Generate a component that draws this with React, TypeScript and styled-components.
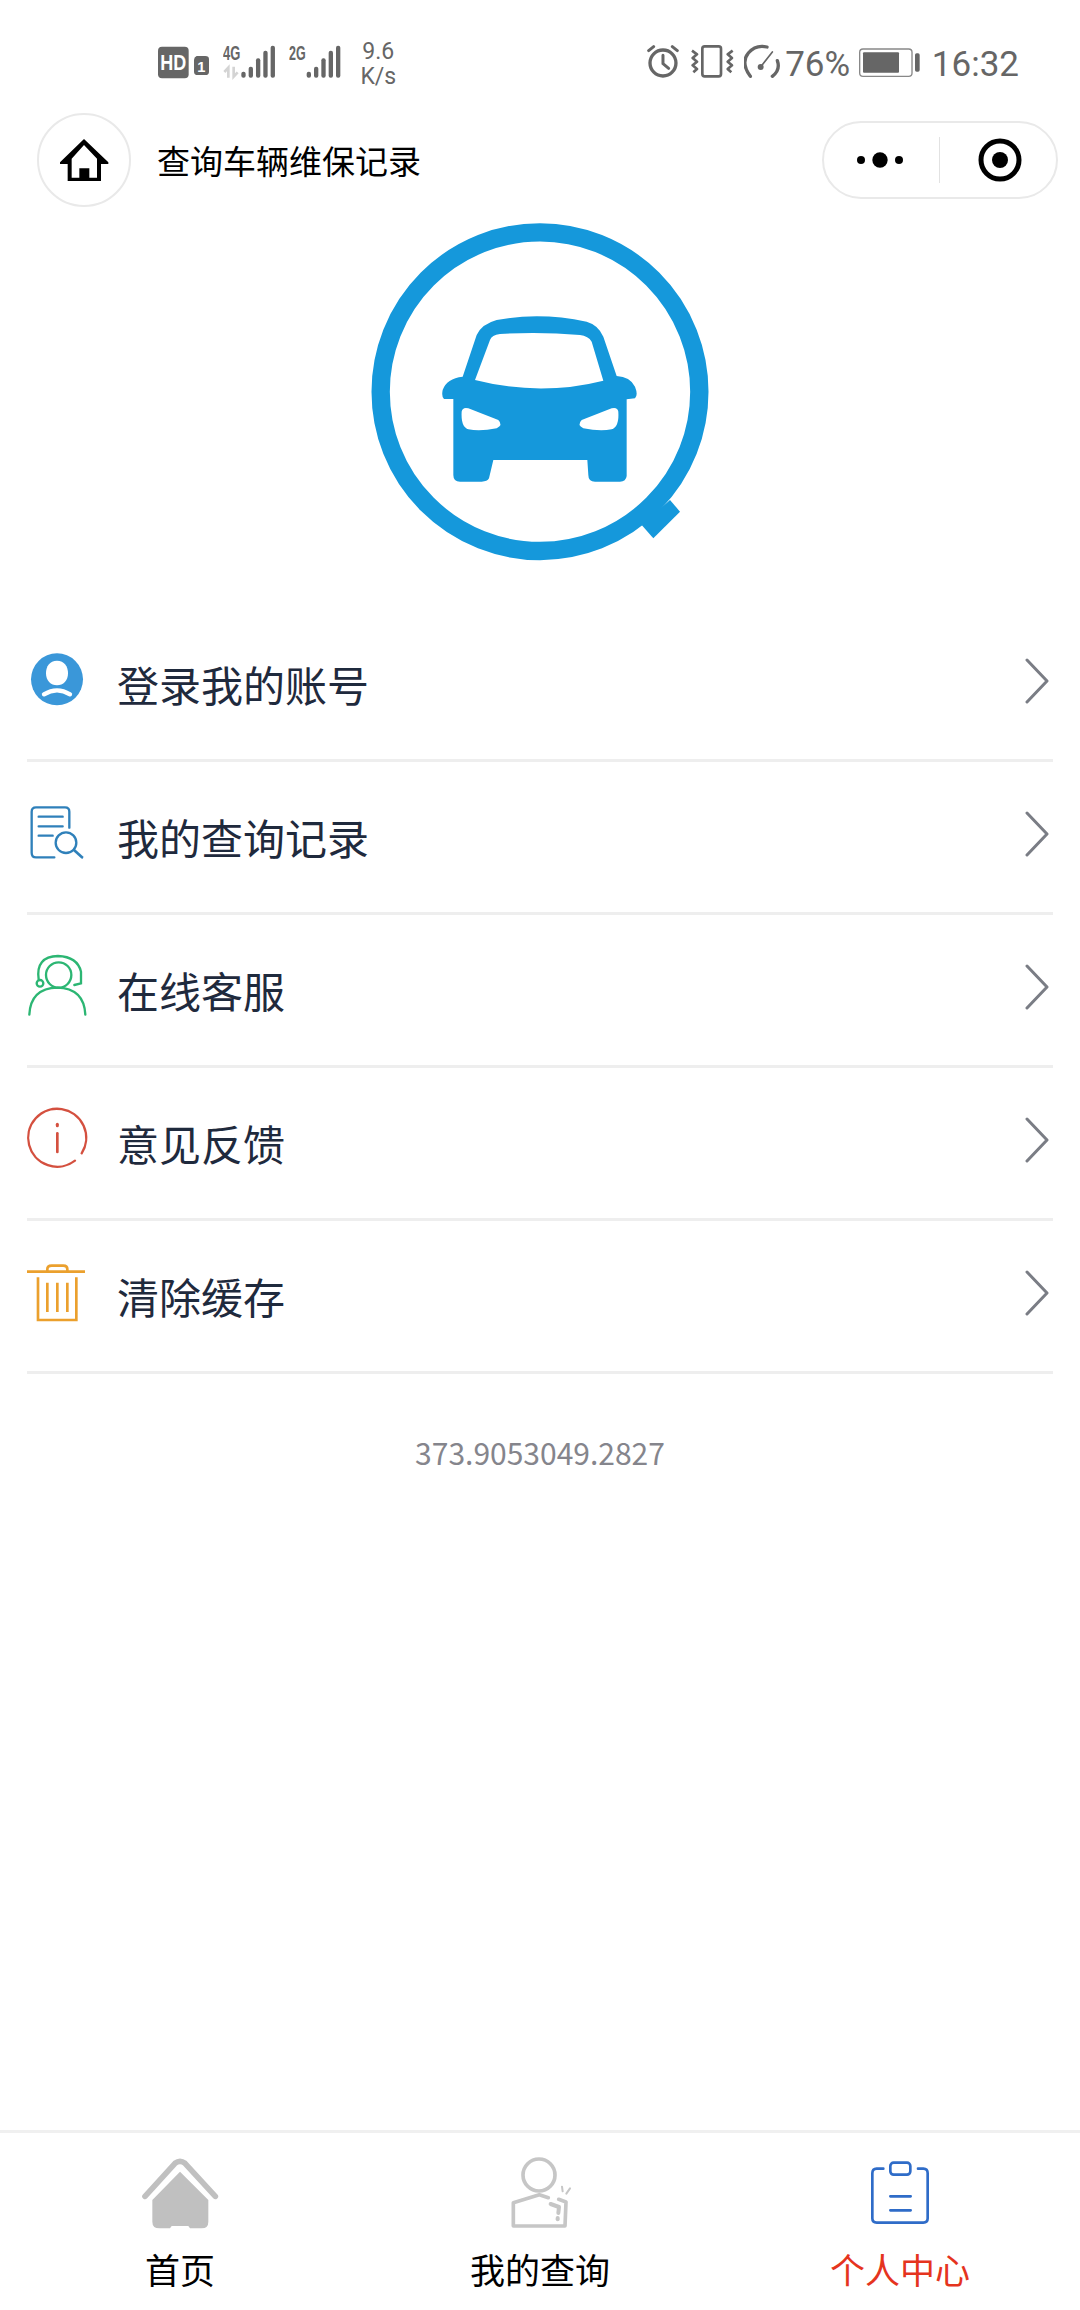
import React from 'react';
import styled, { createGlobalStyle } from 'styled-components';

const CJK = `"Noto Sans CJK SC", "Noto Sans", sans-serif`;

const Global = createGlobalStyle`
  html, body { margin: 0; padding: 0; background: #fff; }
  * { box-sizing: border-box; }
`;

const Page = styled.div`
  width: 1080px;
  height: 2310px;
  display: flex;
  flex-direction: column;
  background: #fff;
  font-family: ${CJK};
  overflow: hidden;
`;

const StatusBar = styled.div`
  height: 40px;
  margin-top: 42px;
  padding: 0 61px 0 158px;
  display: flex;
  align-items: center;
  justify-content: space-between;
  color: #666;
  font-family: Roboto, sans-serif;
`;

const StatusGroup = styled.div`
  display: flex;
  align-items: center;
  height: 40px;
`;

const StatusIcon = styled.svg<{ $left?: number }>`
  display: block;
  height: 40px;
  flex: none;
  margin-left: ${p => p.$left ?? 0}px;
`;

const Speed = styled.div`
  margin: 3px 0 0 17px;
  width: 40px;
  font-size: 23px;
  line-height: 25px;
  text-align: center;
  white-space: nowrap;
`;

const StatusText = styled.span<{ $left?: number }>`
  font-size: 35px;
  line-height: 40px;
  margin-top: 6px;
  margin-left: ${p => p.$left ?? 0}px;
`;

const NavBar = styled.div`
  height: 94px;
  margin-top: 31px;
  padding: 0 22px 0 37px;
  display: flex;
  align-items: center;
`;

const HomeButton = styled.div`
  width: 94px;
  height: 94px;
  flex: none;
  border: 2px solid #e9e9e9;
  border-radius: 50%;
  display: flex;
  align-items: center;
  justify-content: center;
`;

const NavTitle = styled.div`
  margin-left: 26px;
  font-size: 33px;
  line-height: 44px;
  color: #000;
`;

const Capsule = styled.div`
  margin-left: auto;
  width: 236px;
  height: 78px;
  border: 2px solid #e9e9e9;
  border-radius: 39px;
  display: flex;
  align-items: center;
`;

const CapsuleCell = styled.div<{ $nudge: number }>`
  flex: 1;
  height: 100%;
  display: flex;
  align-items: center;
  justify-content: center;
  padding-left: ${p => Math.max(p.$nudge, 0)}px;
  padding-right: ${p => Math.max(-p.$nudge, 0)}px;
`;

const CapsuleDivider = styled.div`
  width: 1px;
  height: 46px;
  background: #e2e2e2;
  flex: none;
`;

const LogoWrap = styled.div`
  margin-top: 3px;
  height: 360px;
  display: flex;
  justify-content: center;
`;

const Menu = styled.div`
  margin: 39px 27px 0;
  display: flex;
  flex-direction: column;
`;

const Row = styled.div`
  height: 153px;
  border-bottom: 3px solid #eeeeee;
  display: flex;
  align-items: flex-start;
`;

const RowIcon = styled.svg`
  display: block;
  flex: none;
  width: 60px;
  height: 60px;
  margin-top: 41px;
  overflow: visible;
`;

const RowLabel = styled.div`
  margin: 45px 0 0 30px;
  font-size: 42px;
  line-height: 60px;
  color: #1f2a3d;
`;

const Chevron = styled.svg`
  display: block;
  flex: none;
  width: 24px;
  height: 46px;
  margin: 49px 4px 0 auto;
`;

const Version = styled.div`
  margin-top: 58px;
  text-align: center;
  font-size: 30px;
  line-height: 40px;
  color: #85858c;
`;

const TabBar = styled.div`
  margin-top: auto;
  height: 180px;
  border-top: 3px solid #f0f0f0;
  display: grid;
  grid-template-columns: repeat(3, 360px);
`;

const Tab = styled.div`
  display: flex;
  flex-direction: column;
  align-items: center;
  padding-top: 20px;
`;

const TabIcon = styled.svg`
  display: block;
  width: 80px;
  height: 80px;
  overflow: visible;
`;

const TabLabel = styled.div<{ $active?: boolean }>`
  margin-top: 11px;
  font-size: 35px;
  line-height: 50px;
  color: ${p => (p.$active ? '#e5341e' : '#000')};
`;

const bars = (x: number) =>
  [125, 110, 85, 62, 47].map((t, i) => (
    <rect key={i} x={x + i * 22} y={t} width={13} height={143 - t} rx={6} fill="#666" />
  ));

const menu = [
  {
    label: '登录我的账号',
    box: '81 60 180 180',
    icon: (
      <>
        <circle cx="171" cy="148" r="78" fill="#3a97d9" />
        <path d="M171 92c-22 0-33 17-33 38 0 22 14 36 33 36s33-14 33-36c0-21-11-38-33-38z" fill="#fff" />
        <path d="M132 193q39-24 78 0" fill="none" stroke="#fff" strokeWidth="13" strokeLinecap="round" />
      </>
    ),
  },
  {
    label: '我的查询记录',
    box: '81 519 180 180',
    icon: (
      <g fill="none" stroke="#2f80ba" strokeWidth="7" strokeLinecap="round">
        <path d="M163 682H108q-13 0-13-14V545q0-13 13-13h87q13 0 13 13v48" />
        <path d="M116 560h72M116 589h72M116 617h42" />
        <circle cx="198" cy="638" r="31" />
        <path d="M222 660l24 22" strokeWidth="8" />
      </g>
    ),
  },
  {
    label: '在线客服',
    box: '81 108 180 180',
    icon: (
      <g fill="none" stroke="#2cb673" strokeWidth="7" strokeLinecap="round">
        <circle cx="176" cy="165" r="38" />
        <path d="M116 178q-10-68 58-70 58 2 69 47v35l-20 5" />
        <circle cx="120" cy="190" r="10" />
        <path d="M88 284q4-79 84-81 80 2 84 81" />
      </g>
    ),
  },
  {
    label: '意见反馈',
    box: '81 567 180 180',
    icon: (
      <g fill="none" stroke="#d4503f" strokeWidth="7" strokeLinecap="round">
        <path d="M245 700A87 87 0 1 0 225 722" />
        <path d="M172 640v56" strokeWidth="8" />
        <path d="M172 613v4" strokeWidth="9" />
      </g>
    ),
  },
  {
    label: '清除缓存',
    box: '81 1026 180 180',
    icon: (
      <g fill="none" stroke="#eba02d" strokeWidth="8">
        <path d="M81 1055H255" />
        <path d="M142 1055v-8q0-10 13-10h35q12 0 12 10v8" />
        <path d="M114 1072v128h115v-128" />
        <path d="M142 1088v88M172 1088v88M202 1088v88" />
      </g>
    ),
  },
];

export default function App() {
  return (
    <Page>
      <Global />
      <StatusBar>
        <StatusGroup>
          <StatusIcon viewBox="55 36 153 120" width="51">
            <rect x="55" y="50" width="92" height="95" rx="12" fill="#666" />
            <text x="101" y="121" textAnchor="middle" fontFamily="Liberation Sans" fontWeight="700" fontSize="68" textLength="78" lengthAdjust="spacingAndGlyphs" fill="#fff">HD</text>
            <path d="M163 90q0-9 8-12h26q11 0 11 10v37q0 10-11 10h-23q-11 0-11-10z" fill="#666" />
            <text x="185" y="126" textAnchor="middle" fontFamily="Liberation Sans" fontWeight="700" fontSize="44" fill="#fff">1</text>
          </StatusIcon>
          <StatusIcon viewBox="250 36 157 120" width="52.3" $left={14}>
            <text x="250" y="90" fontFamily="Liberation Sans" fontWeight="700" fontSize="58" textLength="52" lengthAdjust="spacingAndGlyphs" fill="#666">4G</text>
            <path d="M266 143v-30l-12 13M282 110v30l12-13" fill="none" stroke="#d4d4d4" strokeWidth="8" />
            {bars(305)}
          </StatusIcon>
          <StatusIcon viewBox="447 36 156 120" width="52" $left={14}>
            <text x="447" y="90" fontFamily="Liberation Sans" fontWeight="700" fontSize="58" textLength="50" lengthAdjust="spacingAndGlyphs" fill="#666">2G</text>
            {bars(500)}
          </StatusIcon>
          <Speed>9.6<br />K/s</Speed>
        </StatusGroup>
        <StatusGroup>
          <StatusIcon viewBox="50 36 97 120" width="32.3">
            <g fill="none" stroke="#666" strokeLinecap="round" strokeLinejoin="round">
              <circle cx="98" cy="99" r="39" strokeWidth="10" />
              <path d="M98 76v25l17 14" strokeWidth="9" />
              <path d="M55 62l15-12M141 62l-15-12" strokeWidth="9" />
            </g>
          </StatusIcon>
          <StatusIcon viewBox="183 36 129 120" width="43" $left={12}>
            <g fill="none" stroke="#666" strokeWidth="8" strokeLinejoin="round">
              <rect x="217" y="49" width="56" height="90" rx="7" />
              <path d="M186 62l15 11-13 11 13 11-13 11 13 11-11 10" />
              <path d="M308 62l-15 11 13 11-13 11 13 11-13 11 11 10" />
            </g>
          </StatusIcon>
          <StatusIcon viewBox="343 36 107 120" width="35.7" $left={10}>
            <g fill="none" stroke="#666" strokeWidth="10" strokeLinecap="round">
              <path d="M362 139q-30-40-6-70 22-26 56-18" />
              <path d="M443 92q10 28-15 47" />
              <path d="M392 112l36-46" strokeWidth="5" />
            </g>
            <circle cx="393" cy="111" r="9" fill="#666" />
          </StatusIcon>
          <StatusText $left={5}>76%</StatusText>
          <StatusIcon viewBox="690 36 182 120" width="60.7" $left={9}>
            <rect x="692" y="57" width="157" height="82" rx="10" fill="none" stroke="#888" strokeWidth="4" />
            <rect x="702" y="67" width="108" height="61" rx="3" fill="#666" />
            <rect x="858" y="70" width="14" height="55" rx="5" fill="#666" />
          </StatusIcon>
          <StatusText $left={12}>16:32</StatusText>
        </StatusGroup>
      </StatusBar>

      <NavBar>
        <HomeButton>
          <svg width="60" height="60" viewBox="102 90 180 180" style={{ display: 'block' }}>
            <path d="M192 117L265 187V192H243V243H143V192H120V187Z" fill="#000" />
            <path d="M192 135L231 176V233H208V205H178V233H155V176Z" fill="#fff" />
          </svg>
        </HomeButton>
        <NavTitle>查询车辆维保记录</NavTitle>
        <Capsule>
          <CapsuleCell $nudge={-3}>
            <svg width="46" height="18" viewBox="171 154 138 54" style={{ display: 'block' }}>
              <circle cx="183" cy="181" r="12" />
              <circle cx="240" cy="181" r="23" />
              <circle cx="297" cy="181" r="12" />
            </svg>
          </CapsuleCell>
          <CapsuleDivider />
          <CapsuleCell $nudge={4}>
            <svg width="44" height="44" viewBox="0 0 132 132" style={{ display: 'block' }}>
              <circle cx="66" cy="66" r="57" fill="none" stroke="#000" strokeWidth="15" />
              <circle cx="66" cy="66" r="24" />
            </svg>
          </CapsuleCell>
        </Capsule>
      </NavBar>

      <LogoWrap>
        <svg width="400" height="360" viewBox="0 0 1200 1080" style={{ display: 'block' }}>
          <circle cx="600" cy="545" r="478" fill="none" stroke="#1598db" strokeWidth="55" />
          <path d="M905 945L990 870L1020 905L940 985Z" fill="#1598db" />
          <path
            d="M340 567H312Q304 560 308 540Q320 505 368 500L410 375Q425 342 470 330Q600 305 740 335Q775 345 790 380L830 498Q870 500 885 530Q895 555 885 565L860 568V798Q858 815 840 815H765Q745 815 745 795L742 750H460L447 805Q442 815 425 815H360Q340 815 340 795Z"
            fill="#1598db"
          />
          <path d="M405 510L450 390Q455 375 480 372Q600 365 720 375Q745 378 755 395L790 512Q600 560 405 510Z" fill="#fff" />
          <path d="M365 605Q368 590 385 595L475 630Q490 645 470 655Q420 665 385 658Q362 650 365 605Z" fill="#fff" />
          <path d="M835 605Q832 590 815 595L725 630Q710 645 730 655Q780 665 815 658Q838 650 835 605Z" fill="#fff" />
        </svg>
      </LogoWrap>

      <Menu>
        {menu.map(m => (
          <Row key={m.label}>
            <RowIcon viewBox={m.box}>{m.icon}</RowIcon>
            <RowLabel>{m.label}</RowLabel>
            <Chevron viewBox="0 0 24 46">
              <path d="M2 2l20 21L2 44" fill="none" stroke="#7a7d85" strokeWidth="3" strokeLinecap="round" strokeLinejoin="round" />
            </Chevron>
          </Row>
        ))}
      </Menu>

      <Version>373.9053049.2827</Version>

      <TabBar>
        <Tab>
          <TabIcon viewBox="120 99 240 240">
            <path d="M240 155L325 240V305Q325 325 305 325H270L265 318H215L210 325H178Q157 325 157 305V240Z" fill="#c0c0c0" />
            <path d="M135 229L225 130Q240 118 255 130L346 229" fill="none" stroke="#c0c0c0" strokeWidth="17" strokeLinecap="round" strokeLinejoin="round" />
          </TabIcon>
          <TabLabel>首页</TabLabel>
        </Tab>
        <Tab>
          <TabIcon viewBox="1200 99 240 240">
            <g fill="none" stroke="#c6c6c6" strokeWidth="11" strokeLinecap="round" strokeLinejoin="round">
              <circle cx="1317" cy="165" r="48" />
              <path d="M1345 233l-27-9-78 24v70h155l3-72-22-8" />
              <path d="M1352 252l25 9-2 18" strokeWidth="12" />
              <path d="M1373 294v4" strokeWidth="12" />
              <path d="M1386 200l2 14M1410 205l-11 16" strokeWidth="6" />
            </g>
          </TabIcon>
          <TabLabel>我的查询</TabLabel>
        </Tab>
        <Tab>
          <TabIcon viewBox="240 99 240 240">
            <g fill="none" stroke="#2f6cc8" strokeWidth="8" strokeLinecap="round">
              <path d="M310 146H290Q277 146 277 160V295Q277 308 290 308H430Q443 308 443 295V160Q443 146 430 146H414" />
              <rect x="331" y="128" width="60" height="36" rx="10" />
              <path d="M331 229H392M331 271H392" />
            </g>
          </TabIcon>
          <TabLabel $active>个人中心</TabLabel>
        </Tab>
      </TabBar>
    </Page>
  );
}
